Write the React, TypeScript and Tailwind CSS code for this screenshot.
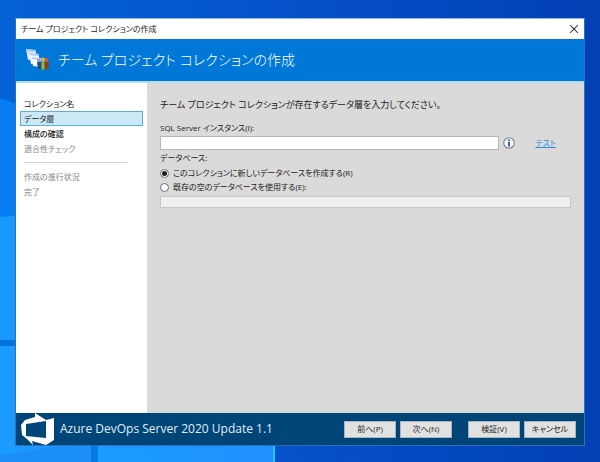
import React, { useState } from 'react';
import { X } from 'lucide-react';
import { clsx } from 'clsx';

interface Step {
  label: string;
  state: 'done' | 'current' | 'next' | 'disabled';
}

const setupSteps: Step[] = [
  { label: 'コレクション名', state: 'done' },
  { label: 'データ層', state: 'current' },
  { label: '構成の確認', state: 'next' },
  { label: '適合性チェック', state: 'disabled' },
];

const progressSteps: Step[] = [
  { label: '作成の進行状況', state: 'disabled' },
  { label: '完了', state: 'disabled' },
];

const Wallpaper: React.FC = () => (
  <svg
    className="absolute inset-0 h-full w-full"
    viewBox="0 0 600 462"
    preserveAspectRatio="none"
    aria-hidden="true"
  >
    <defs>
      <linearGradient id="sky" x1="0" y1="0" x2="1" y2="0">
        <stop offset="0" stopColor="#0562d6" />
        <stop offset="0.4" stopColor="#0554cc" />
        <stop offset="1" stopColor="#0340b4" />
      </linearGradient>
      <linearGradient id="pane" x1="0" y1="0" x2="1" y2="0">
        <stop offset="0" stopColor="#1a9cfd" />
        <stop offset="1" stopColor="#2090fc" />
      </linearGradient>
    </defs>
    <rect width="600" height="462" fill="url(#sky)" />
    <path d="M0 98 L20 105 V220 H0 Z" fill="#057cf0" />
    <path d="M0 217 L20 215 V340 H0 Z" fill="#1698fd" />
    <path d="M0 340 H20 V346 H0 Z" fill="#0474dc" />
    <path d="M0 346 H20 V440 H91 V462 H0 Z" fill="url(#pane)" />
    <path d="M0 455 L64 446 H91 V462 H0 Z" fill="#1a90f6" />
    <path d="M91 440 H98 V462 H91 Z" fill="#0678e6" />
    <path d="M98 440 H274 V462 H98 Z" fill="url(#pane)" />
    <path d="M273 440 H275 V462 H273 Z" fill="#22c4ff" />
  </svg>
);

const CollectionIcon: React.FC = () => (
  <svg className="h-6 w-6 shrink-0" viewBox="0 0 24 24" aria-hidden="true">
    <path d="M0 1 L10 2 V11 L2 12 Z" fill="#dfeafc" />
    <path d="M0 1 L10 2 V4 L1 3 Z" fill="#9fc2f6" />
    <path d="M3 5 L13 6 V15 L5 16 Z" fill="#f2f7ff" />
    <path d="M3 5 L13 6 V8 L4 7 Z" fill="#a9c8f7" />
    <path d="M6 9 L15 10 V19 L7 18 Z" fill="#fff" />
    <path d="M6 9 L15 10 V12 L6 11 Z" fill="#b4cff8" />
    <circle cx="13" cy="12.5" r="2" fill="#7f9fe0" />
    <path d="M11 14 H15 V21 H12 Z" fill="#27479c" />
    <circle cx="20.5" cy="12" r="2" fill="#c9603f" />
    <path d="M18.5 14 H22.5 V21 H18.5 Z" fill="#a5301f" />
    <circle cx="17" cy="11.5" r="2" fill="#e9b44a" />
    <path d="M15 14 H19 V22 H15 Z" fill="#3f9a2c" />
    <path d="M17 13 V21" stroke="#dbe55e" strokeWidth="1" />
  </svg>
);

const InfoIcon: React.FC = () => (
  <svg className="ml-1 h-3 w-3 shrink-0" viewBox="0 0 12 12" aria-hidden="true">
    <circle cx="6" cy="6" r="5.3" fill="#f4f6fb" stroke="#7d8088" strokeWidth="1.1" />
    <circle cx="6" cy="3.2" r="1" fill="#2c4fae" />
    <path d="M6 5 V9.6" fill="none" stroke="#2c4fae" strokeWidth="1.8" />
  </svg>
);

const DevOpsLogo: React.FC = () => (
  <svg className="h-8 w-[33px] shrink-0" viewBox="0 0 33 32" aria-hidden="true">
    <path
      d="M0 12 L4 7 L14 4 V0 L25 7 L33 5 V27 L25 32 L11 28 L12 32 L6 26 L1 22 Z M5 11 V23 L25 25 V8 Z"
      fill="#fff"
      fillRule="evenodd"
    />
  </svg>
);

const StepItem: React.FC<{ step: Step }> = ({ step }) => (
  <li
    aria-current={step.state === 'current' ? 'step' : undefined}
    className={clsx(
      'border px-[3px] text-[8px] leading-[13px]',
      step.state === 'current' ? 'border-[#5cb0dc] bg-[#cbe8f6]' : 'border-transparent',
      step.state === 'disabled' ? 'text-[#858585]' : 'text-[#1c1c1c]',
      step.state === 'next' && 'font-medium'
    )}
  >
    {step.label}
  </li>
);

const FooterButton: React.FC<{ children: React.ReactNode }> = ({ children }) => (
  <button
    type="button"
    className="h-[17px] w-[52px] border border-[#a9b4bc] bg-[#e1e1e1] text-[8px] leading-[14px] whitespace-nowrap text-[#1c1c1c]"
  >
    {children}
  </button>
);

const App: React.FC = () => {
  const [instance, setInstance] = useState<string>('');
  const [database, setDatabase] = useState<'new' | 'existing'>('new');
  const [existingName, setExistingName] = useState<string>('');

  const radioClass =
    "grid h-[9px] w-[9px] appearance-none place-items-center rounded-full border border-[#6c6c6c] bg-white checked:before:h-[5px] checked:before:w-[5px] checked:before:rounded-full checked:before:bg-[#1c1c1c] checked:before:content-['']";

  return (
    <div className="relative min-h-screen overflow-hidden font-['Open_Sans','Noto_Sans_CJK_JP',sans-serif] text-[#1c1c1c] [font-feature-settings:'palt']">
      <Wallpaper />
      <div className="relative flex min-h-screen flex-col px-[15px] pt-[18px] pb-4">
        <main className="flex flex-1 flex-col border border-[#2c6fb4] border-t-[#8fb8ea]">
          <header className="flex h-5 items-center justify-between bg-white pr-[3px] pl-[5px]">
            <span className="text-[8px] leading-4">チーム プロジェクト コレクションの作成</span>
            <button type="button" aria-label="閉じる">
              <X size={14} strokeWidth={1.8} />
            </button>
          </header>

          <div className="flex h-11 items-center gap-2 border-b-2 border-[#b5dcf8] bg-[#0078d7] pl-[10px] text-white">
            <CollectionIcon />
            <h1 className="text-[14px] leading-6 font-light">チーム プロジェクト コレクションの作成</h1>
          </div>

          <div className="flex flex-1">
            <nav className="w-[131px] shrink-0 bg-white px-1 pt-[13px]">
              <ul>
                {setupSteps.map((step) => (
                  <StepItem key={step.label} step={step} />
                ))}
              </ul>
              <hr className="my-1.5 mr-4 ml-1 border-[#cdcdf2]" />
              <ul>
                {progressSteps.map((step) => (
                  <StepItem key={step.label} step={step} />
                ))}
              </ul>
            </nav>

            <form className="flex-1 bg-[#dadada] px-[13px] pt-3 text-[8px]" onSubmit={(e) => e.preventDefault()}>
              <h2 className="text-[9px] leading-5">
                チーム プロジェクト コレクションが存在するデータ層を入力してください。
              </h2>
              <label htmlFor="instance" className="mt-[5px] block leading-4">
                SQL Server インスタンス(I):
              </label>
              <div className="flex items-center">
                <input
                  id="instance"
                  type="text"
                  value={instance}
                  onChange={(e) => setInstance(e.target.value)}
                  className="h-[14px] min-w-0 flex-1 border border-[#b4b5ba] bg-white px-1 outline-none"
                />
                <InfoIcon />
                <a href="#test" className="mr-[15px] ml-5 leading-[14px] text-[#2f8ee0] underline">
                  テスト
                </a>
              </div>
              <fieldset>
                <legend className="leading-4">データベース:</legend>
                <label className="flex items-center gap-1 leading-[14px]">
                  <input
                    type="radio"
                    name="database"
                    className={radioClass}
                    checked={database === 'new'}
                    onChange={() => setDatabase('new')}
                  />
                  このコレクションに新しいデータベースを作成する(R)
                </label>
                <label className="flex items-center gap-1 leading-[14px]">
                  <input
                    type="radio"
                    name="database"
                    className={radioClass}
                    checked={database === 'existing'}
                    onChange={() => setDatabase('existing')}
                  />
                  既存の空のデータベースを使用する(E):
                </label>
                <input
                  type="text"
                  aria-label="既存の空のデータベース"
                  value={existingName}
                  onChange={(e) => setExistingName(e.target.value)}
                  disabled={database === 'new'}
                  className="mt-0.5 block h-3 w-full border border-[#c6c6c6] bg-white px-1 outline-none disabled:bg-[#efefef]"
                />
              </fieldset>
            </form>
          </div>

          <footer className="flex h-8 items-center bg-[#004578] pr-2 pl-[5px]">
            <DevOpsLogo />
            <p className="ml-1.5 flex-1 text-[12px] leading-5 whitespace-nowrap text-[#e2edf6]">
              Azure DevOps Server 2020 Update 1.1
            </p>
            <div className="flex gap-4">
              <div className="flex gap-1">
                <FooterButton>前へ(P)</FooterButton>
                <FooterButton>次へ(N)</FooterButton>
              </div>
              <div className="flex gap-1">
                <FooterButton>検証(V)</FooterButton>
                <FooterButton>キャンセル</FooterButton>
              </div>
            </div>
          </footer>
        </main>
      </div>
    </div>
  );
};

export default App;
